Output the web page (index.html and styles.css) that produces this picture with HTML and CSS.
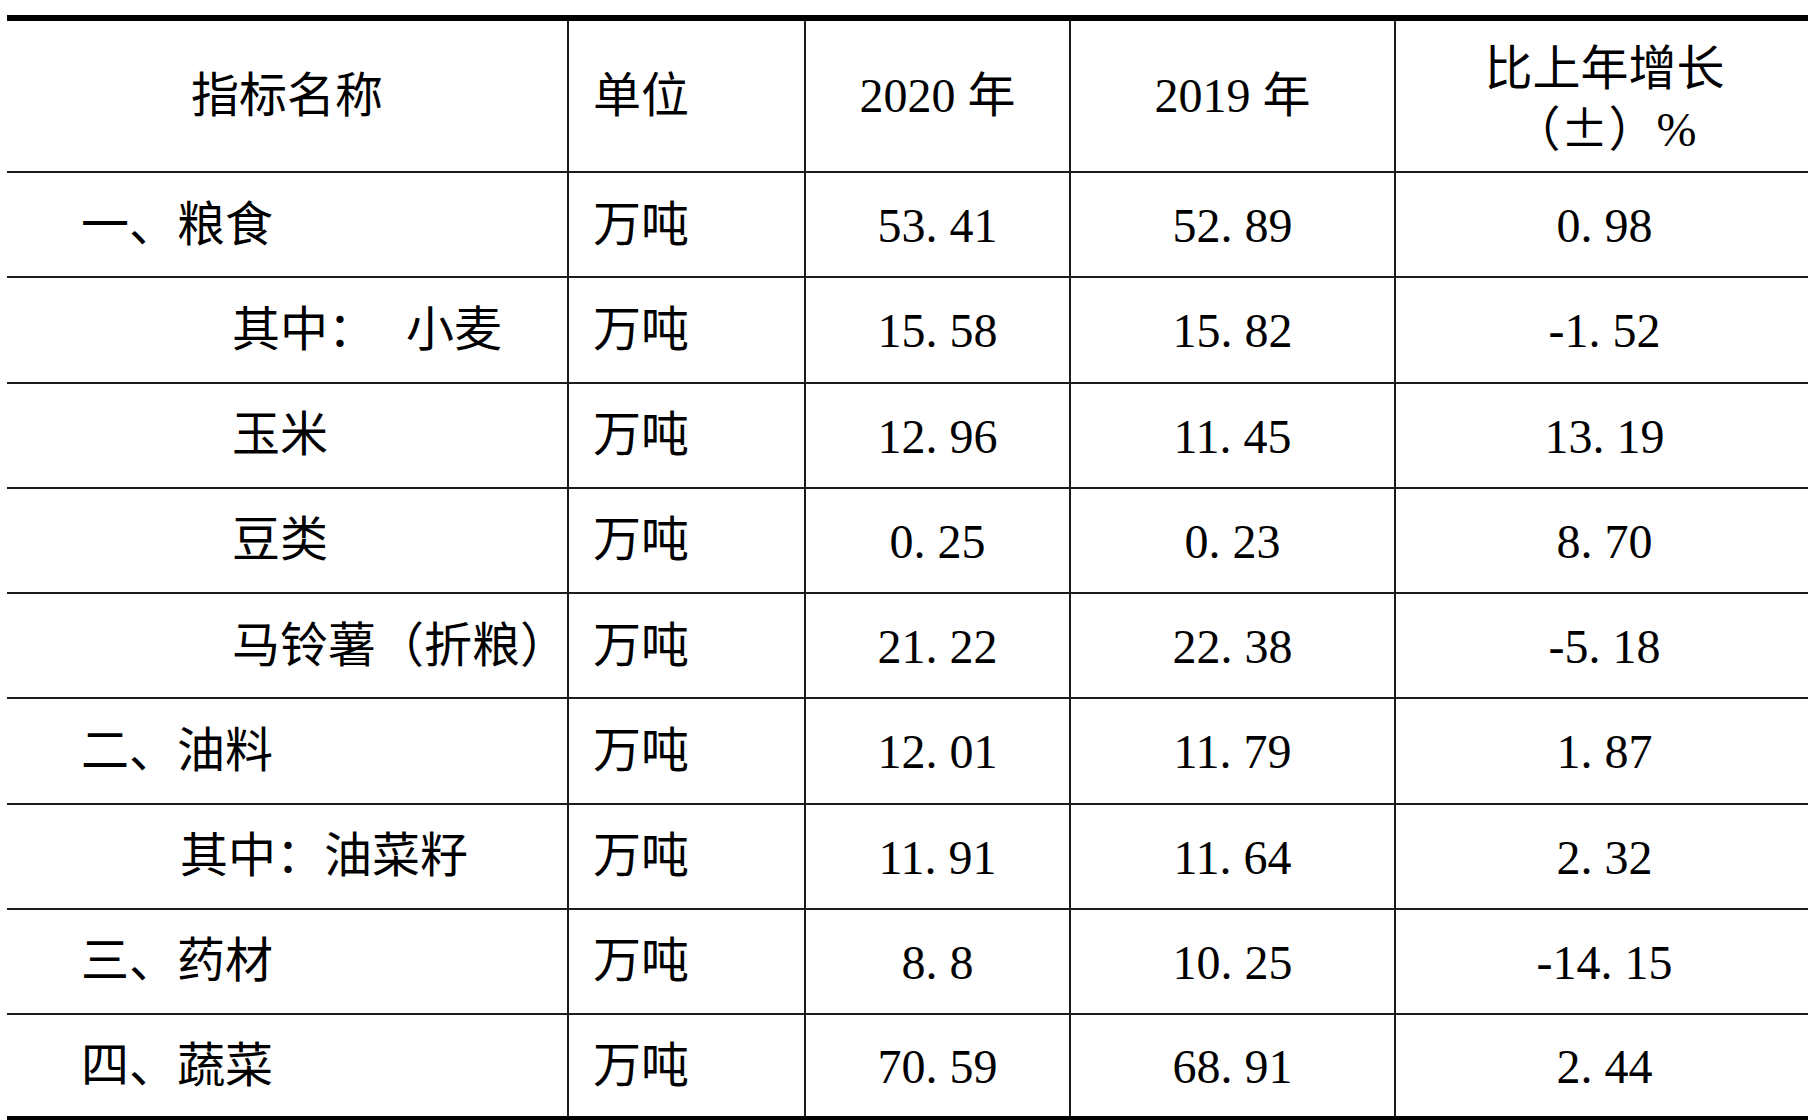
FILE: index.html
```html
<!DOCTYPE html>
<html lang="zh-CN">
<head>
<meta charset="utf-8">
<title>主要农产品产量</title>
<link rel="stylesheet" href="styles.css">
</head>
<body>
<table class="stats">
  <colgroup>
    <col class="c-name"><col class="c-unit"><col class="c-y1"><col class="c-y2"><col class="c-grow">
  </colgroup>
  <thead>
    <tr class="head">
      <th class="name-h">指标名称</th>
      <th class="unit">单位</th>
      <th>2020 年</th>
      <th>2019 年</th>
      <th class="grow-h"><span class="hl">比上年增长</span><span class="hl">（<span class="pm">±</span>）%</span></th>
    </tr>
  </thead>
  <tbody>
    <tr><td class="l1">一、粮食</td><td class="unit">万吨</td><td class="num">53<span class="dot">.</span>41</td><td class="num">52<span class="dot">.</span>89</td><td class="num">0<span class="dot">.</span>98</td></tr>
    <tr><td class="l3">其中：<span class="gap"></span>小麦</td><td class="unit">万吨</td><td class="num">15<span class="dot">.</span>58</td><td class="num">15<span class="dot">.</span>82</td><td class="num">-1<span class="dot">.</span>52</td></tr>
    <tr><td class="l3">玉米</td><td class="unit">万吨</td><td class="num">12<span class="dot">.</span>96</td><td class="num">11<span class="dot">.</span>45</td><td class="num">13<span class="dot">.</span>19</td></tr>
    <tr><td class="l3">豆类</td><td class="unit">万吨</td><td class="num">0<span class="dot">.</span>25</td><td class="num">0<span class="dot">.</span>23</td><td class="num">8<span class="dot">.</span>70</td></tr>
    <tr><td class="l3">马铃薯（折粮）</td><td class="unit">万吨</td><td class="num">21<span class="dot">.</span>22</td><td class="num">22<span class="dot">.</span>38</td><td class="num">-5<span class="dot">.</span>18</td></tr>
    <tr><td class="l1">二、油料</td><td class="unit">万吨</td><td class="num">12<span class="dot">.</span>01</td><td class="num">11<span class="dot">.</span>79</td><td class="num">1<span class="dot">.</span>87</td></tr>
    <tr><td class="l2">其中：油菜籽</td><td class="unit">万吨</td><td class="num">11<span class="dot">.</span>91</td><td class="num">11<span class="dot">.</span>64</td><td class="num">2<span class="dot">.</span>32</td></tr>
    <tr><td class="l1">三、药材</td><td class="unit">万吨</td><td class="num">8<span class="dot">.</span>8</td><td class="num">10<span class="dot">.</span>25</td><td class="num">-14<span class="dot">.</span>15</td></tr>
    <tr><td class="l1">四、蔬菜</td><td class="unit">万吨</td><td class="num">70<span class="dot">.</span>59</td><td class="num">68<span class="dot">.</span>91</td><td class="num">2<span class="dot">.</span>44</td></tr>
  </tbody>
</table>
</body>
</html>
```
FILE: styles.css
```css
html, body {
  margin: 0;
  padding: 0;
  background: #fff;
  overflow: hidden;
}

.stats {
  border-collapse: collapse;
  table-layout: fixed;
  width: 1806px;
  margin: 15px 0 0 7px;
  font-family: "Liberation Serif", "Noto Sans CJK SC", serif;
  font-size: 48px;
  color: #000;
  border-top: 6px solid #000;
  border-bottom: 6px solid #000;
}

.c-name { width: 561px; }
.c-unit { width: 237px; }
.c-y1 { width: 265px; }
.c-y2 { width: 325px; }
.c-grow { width: 418px; }

.stats th,
.stats td {
  padding: 0;
  border-top: 2px solid #1c1c1c;
  border-left: 2px solid #1c1c1c;
  font-weight: normal;
  white-space: nowrap;
  vertical-align: middle;
  text-align: center;
  line-height: 60px;
  overflow: visible;
}

.stats th:first-child,
.stats td:first-child {
  border-left: none;
}

.head { height: 154px; }
.stats tbody tr { height: 105.25px; }

.stats .unit {
  text-align: left;
  padding-left: 24px;
}

.stats .l1 { text-align: left; padding-left: 74px; }
.stats .l2 { text-align: left; padding-left: 173px; }
.stats .l3 { text-align: left; padding-left: 225px; }

.stats .num { padding-top: 3px; }

.gap {
  display: inline-block;
  width: 30px;
}

.dot {
  display: inline-block;
  width: 0.5em;
  text-align: left;
}

.grow-h .hl {
  display: block;
  line-height: 56px;
}

.grow-h .hl:first-child {
  padding-top: 6px;
}

.pm {
  display: inline-block;
  width: 1em;
  text-align: center;
  font-family: "Noto Sans CJK SC", sans-serif;
}
```
